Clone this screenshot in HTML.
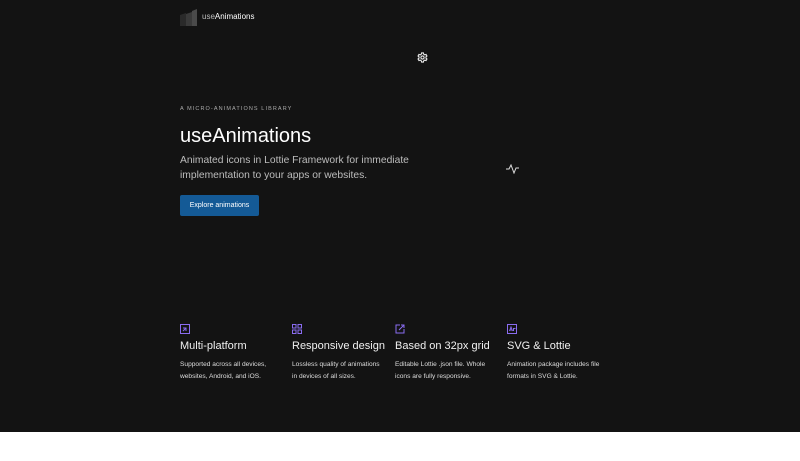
<!DOCTYPE html>
<html><head><style>
*{margin:0;padding:0;box-sizing:border-box}
body{width:800px;height:461px;background:#fff;font-family:"Liberation Sans",sans-serif;overflow:hidden;position:relative}
.dark{position:absolute;left:0;top:0;width:800px;height:432px;background:#131313}
.a{position:absolute;white-space:nowrap}
.f h3{font-size:11px;color:#f0f0f0;font-weight:normal;position:absolute;top:16px;white-space:nowrap}
.f p{font-size:6.6px;color:#ddd;line-height:12px;position:absolute;top:35px;white-space:nowrap}
.f{position:absolute;top:324px;width:110px;height:60px}
</style></head><body>
<div class="dark"></div>
<svg class="a" style="left:180px;top:9px" width="18" height="17" viewBox="0 0 18 17"><path d="M0 6 L6 4 L6 17 L0 17Z" fill="#2a2a2a"/><path d="M6 5 L12 3 L12 17 L6 17Z" fill="#3a3a3a"/><path d="M12 2 L17 0 L17 17 L12 17Z" fill="#4a4a4a"/></svg>
<div class="a" style="left:202px;top:12px;font-size:8px;color:#bbb">use<span style="color:#fff">Animations</span></div>
<svg class="a" style="left:417px;top:52px" width="11" height="11" viewBox="0 0 24 24" fill="none" stroke="#eee" stroke-width="2.4"><circle cx="12" cy="12" r="3.5"/><path d="M10 2h4l.6 2.8 2.4 1.4 2.7-.9 2 3.4-2.1 1.9v2.8l2.1 1.9-2 3.4-2.7-.9-2.4 1.4L14 22h-4l-.6-2.8-2.4-1.4-2.7.9-2-3.4 2.1-1.9v-2.8L2.3 8.7l2-3.4 2.7.9 2.4-1.4z"/></svg>
<div class="a" style="left:180px;top:106px;font-size:5.5px;letter-spacing:1.1px;color:#aaa">A MICRO-ANIMATIONS LIBRARY</div>
<div class="a" style="left:180px;top:125px;font-size:20px;color:#fff">useAnimations</div>
<div class="a" style="left:180px;top:153px;font-size:10.3px;color:#bdbdbd;line-height:15px">Animated icons in Lottie Framework for immediate<br>implementation to your apps or websites.</div>
<svg class="a" style="left:506px;top:164px" width="13" height="10" viewBox="0 0 13 10" fill="none" stroke="#ddd" stroke-width="1"><path d="M0 5h3l2-4 3 8 2-5h3"/></svg>
<div class="a" style="left:180px;top:195px;width:79px;height:21px;background:#145a96;border-radius:2px;color:#fff;font-size:7px;text-align:center;line-height:21px">Explore animations</div>
<div class="f" style="left:180px"><svg class="a" style="left:0;top:0" width="10" height="10" viewBox="0 0 10 10" fill="none" stroke="#8a6cf0"><rect x=".5" y=".5" width="9" height="9"/><path d="M3 7l3-3M3 4h3v3"/></svg><h3>Multi-platform</h3><p>Supported across all devices,<br>websites, Android, and iOS.</p></div>
<div class="f" style="left:292px"><svg class="a" style="left:0;top:0" width="10" height="10" viewBox="0 0 10 10" fill="none" stroke="#8a6cf0"><rect x=".5" y=".5" width="3.5" height="3.5"/><rect x="6" y=".5" width="3.5" height="3.5"/><rect x=".5" y="6" width="3.5" height="3.5"/><rect x="6" y="6" width="3.5" height="3.5"/></svg><h3>Responsive design</h3><p>Lossless quality of animations<br>in devices of all sizes.</p></div>
<div class="f" style="left:395px"><svg class="a" style="left:0;top:0" width="10" height="10" viewBox="0 0 10 10" fill="none" stroke="#8a6cf0"><path d="M5 1H1v8h8V5M4 6l5-5M6 1h3v3"/></svg><h3>Based on 32px grid</h3><p>Editable Lottie .json file. Whole<br>icons are fully responsive.</p></div>
<div class="f" style="left:507px"><svg class="a" style="left:0;top:0" width="10" height="10" viewBox="0 0 10 10" fill="none" stroke="#8a6cf0"><rect x=".5" y=".5" width="9" height="9"/><path d="M2.5 7l1.5-4 1.5 4M3 6h2M6.5 4v3M6.5 5q1-1 2-.5"/></svg><h3>SVG &amp; Lottie</h3><p>Animation package includes file<br>formats in SVG &amp; Lottie.</p></div>
</body></html>
